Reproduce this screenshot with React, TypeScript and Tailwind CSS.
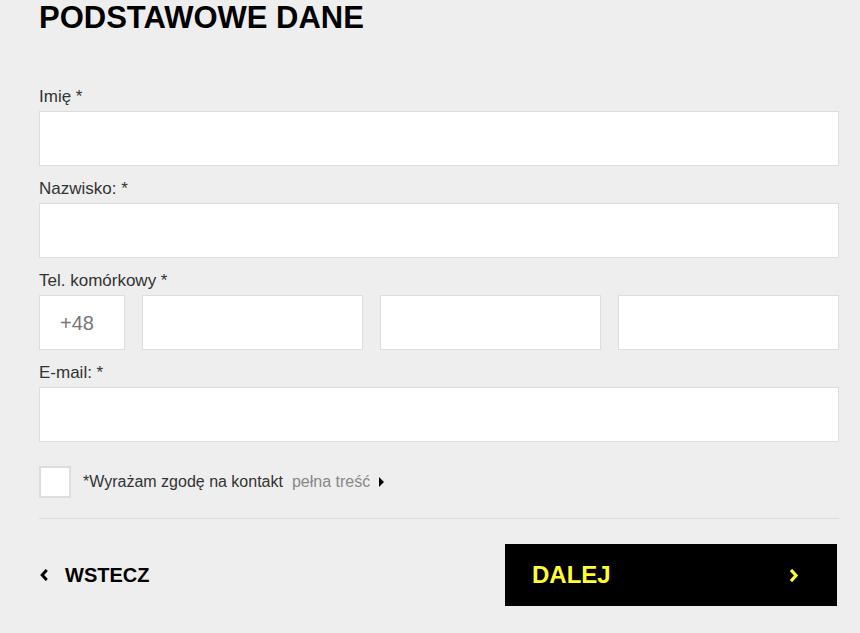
const font = { fontFamily: '"Liberation Sans", Arial, Helvetica, sans-serif' };

const Field = ({ label, first }: { label: string; first?: boolean }) => (
  <div>
    <label className={`block text-[17px] leading-[20px] text-[#333] mb-[4px] ${first ? 'mt-[51px]' : 'mt-[13px]'}`}>
      {label}
    </label>
    <input type="text" className="block w-full h-[55px] bg-white border border-[#dddddd] outline-none px-4" />
  </div>
);

const Chevron = ({ dir, className }: { dir: 'left' | 'right'; className: string }) => (
  <svg viewBox="0 0 10 13" className={className} fill="none" stroke="currentColor" strokeWidth="3.2" strokeLinejoin="miter">
    {dir === 'left' ? <polyline points="8,1 3,6.5 8,12" /> : <polyline points="2,1 7,6.5 2,12" />}
  </svg>
);

export default function App() {
  return (
    <div className="min-h-[633px] bg-[#eeeeee] pl-[39px]" style={font}>
      <div className="w-[800px]">
        <h1 className="text-[31px] leading-[36px] font-bold text-black">PODSTAWOWE DANE</h1>

        <Field label="Imię *" first />
        <Field label="Nazwisko: *" />

        <div>
          <label className="block text-[17px] leading-[20px] text-[#333] mt-[13px] mb-[4px]">Tel. komórkowy *</label>
          <div className="grid grid-cols-[86px_1fr_1fr_1fr] gap-[17px]">
            <div className="h-[55px] bg-white border border-[#dddddd] flex items-center pl-5 text-[20px] text-[#777]">+48</div>
            <input type="text" className="h-[55px] w-full bg-white border border-[#dddddd] outline-none" />
            <input type="text" className="h-[55px] w-full bg-white border border-[#dddddd] outline-none" />
            <input type="text" className="h-[55px] w-full bg-white border border-[#dddddd] outline-none" />
          </div>
        </div>

        <Field label="E-mail: *" />

        <div className="mt-[24px] flex items-center h-[32px]">
          <div className="w-[32px] h-[32px] bg-white border-2 border-[#dddddd]" />
          <span className="ml-[12px] text-[16px] text-[#333]">*Wyrażam zgodę na kontakt</span>
          <span className="ml-[9px] text-[16px] text-[#888]">pełna treść</span>
          <span className="ml-[9px] w-0 h-0 border-y-[5px] border-y-transparent border-l-[5px] border-l-black" />
        </div>

        <div className="mt-[20px] h-px bg-[#dddddd]" />

        <div className="mt-[25px] flex items-center justify-between">
          <button className="flex items-center text-[20px] font-bold text-black">
            <Chevron dir="left" className="w-[10px] h-[12px]" />
            <span className="ml-[16px]">WSTECZ</span>
          </button>
          <button className="mr-[2px] w-[332px] h-[62px] bg-black flex items-center justify-between pl-[27px] pr-[38px]">
            <span className="text-[24px] font-bold text-[#ffff33]">DALEJ</span>
            <Chevron dir="right" className="w-[10px] h-[13px] text-[#ffff33]" />
          </button>
        </div>
      </div>
    </div>
  );
}
